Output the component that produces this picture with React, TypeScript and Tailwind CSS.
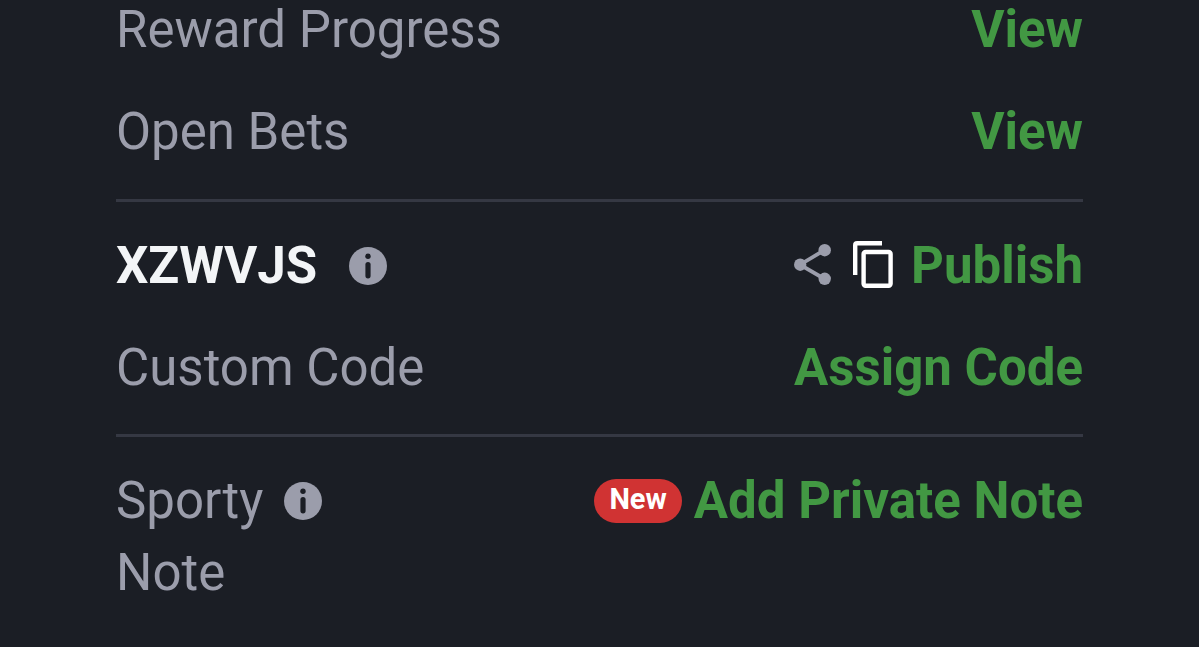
import type { ReactNode } from "react";

const linkClass = "font-bold text-[#429843] whitespace-nowrap";

function InfoIcon() {
  return (
    <svg viewBox="0 0 38 38" className="w-[38px] h-[38px] shrink-0" aria-hidden="true">
      <circle cx="19" cy="19" r="19" fill="#9b9dab" />
      <circle cx="19" cy="9.3" r="2.7" fill="#1b1e25" />
      <rect x="16.4" y="15" width="5.2" height="16.4" rx="2.6" fill="#1b1e25" />
    </svg>
  );
}

function ShareIcon() {
  return (
    <svg viewBox="0 0 37 41" className="w-[37px] h-[41px]" aria-hidden="true">
      <path d="M30.7 6 L6 20.7 L30.7 35" fill="none" stroke="#9b9dab" strokeWidth="3.8" />
      <circle cx="30.7" cy="6.2" r="6.2" fill="#9b9dab" />
      <circle cx="6.2" cy="20.7" r="6.2" fill="#9b9dab" />
      <circle cx="30.7" cy="34.8" r="6.2" fill="#9b9dab" />
    </svg>
  );
}

function CopyIcon() {
  return (
    <svg viewBox="0 0 40 47" className="w-10 h-[47px]" aria-hidden="true">
      <path d="M2.2 34 V4.2 Q2.2 2.2 4.2 2.2 H29" fill="none" stroke="#fff" strokeWidth="4.4" />
      <rect x="10.6" y="11" width="27" height="33.8" rx="2" fill="none" stroke="#fff" strokeWidth="4.4" />
    </svg>
  );
}

function Row({ label, children }: { label: ReactNode; children: ReactNode }) {
  return (
    <div className="flex items-start justify-between">
      <div className="flex items-center">{label}</div>
      <div className="flex items-center">{children}</div>
    </div>
  );
}

export default function App() {
  return (
    <div className="min-h-screen overflow-hidden bg-[#1b1e25] px-[116px] font-['Roboto',sans-serif] text-[51px] leading-[72px] text-[#9b9dab]">
      {/* Rewards and bets */}
      <section className="-mt-1.5 flex flex-col gap-[30px] border-b-3 border-[#353843] pb-[31px]">
        <Row label="Reward Progress">
          <button className={linkClass}>View</button>
        </Row>
        <Row label="Open Bets">
          <button className={linkClass}>View</button>
        </Row>
      </section>

      {/* Booking code */}
      <section className="flex flex-col gap-[30px] border-b-3 border-[#353843] pt-7 pb-[30px]">
        <Row
          label={
            <>
              <span className="font-bold text-[#f3f5f7]">XZWVJS</span>
              <button aria-label="Code info" className="ml-8"><InfoIcon /></button>
            </>
          }
        >
          <div className="mr-[18px] flex items-center gap-[22px] pb-1">
            <button aria-label="Share code"><ShareIcon /></button>
            <button aria-label="Copy code"><CopyIcon /></button>
          </div>
          <button className={linkClass}>Publish</button>
        </Row>
        <Row label="Custom Code">
          <button className={linkClass}>Assign Code</button>
        </Row>
      </section>

      {/* Private note */}
      <section className="pt-7 pb-7">
        <Row
          label={
            <div className="flex">
              <span className="w-[148px]">Sporty Note</span>
              <button aria-label="Note info" className="ml-5 flex h-[72px] items-center"><InfoIcon /></button>
            </div>
          }
        >
          <span className="mr-3 h-11 rounded-full bg-[#d03333] px-[15px] text-[29px] leading-10 font-bold text-white">
            New
          </span>
          <button className={linkClass}>Add Private Note</button>
        </Row>
      </section>
    </div>
  );
}
